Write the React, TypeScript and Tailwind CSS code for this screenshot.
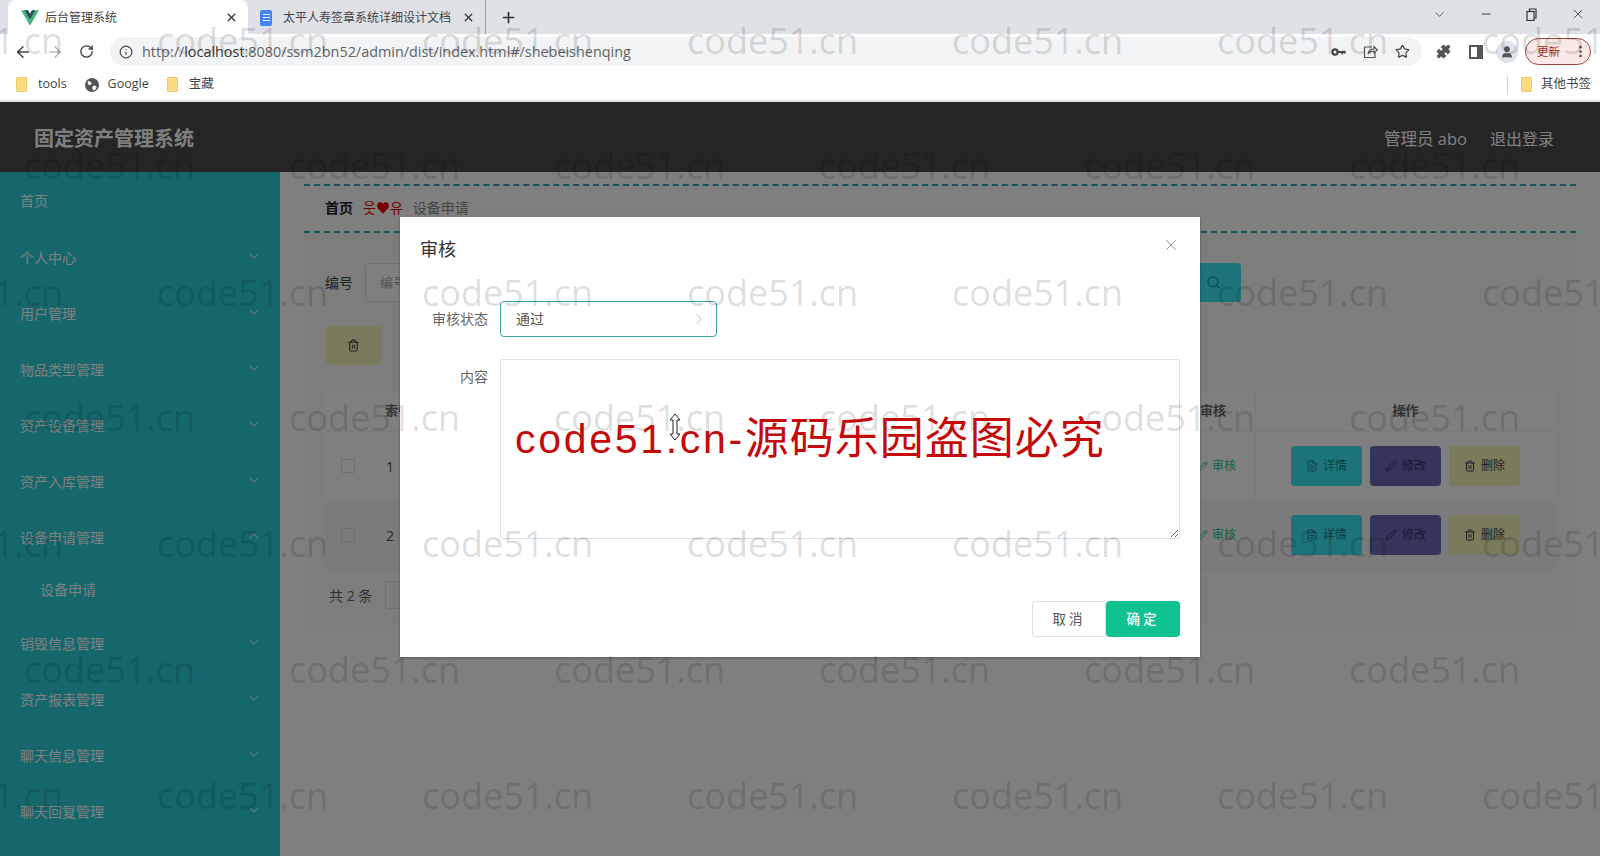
import { ChevronDown, ChevronUp, ChevronRight, ArrowLeft, ArrowRight, RotateCw, Info, Star, Puzzle, X, Plus, Minus, Search, Trash2, FileText, Pencil, User, EllipsisVertical } from "lucide-react";

const font = { fontFamily: '"Open Sans","Noto Sans CJK SC",sans-serif' };

function Folder() {
  return <span className="w-[11px] h-[15px] bg-[#fddc7f] border border-[#eccb70] rounded-[1px] shrink-0" />;
}

function VueLogo() {
  return (
    <svg width="18" height="16" viewBox="0 0 256 221" className="shrink-0">
      <path fill="#41b883" d="M204.8 0H256L128 220.8 0 0h97.92L128 51.2 157.44 0z" />
      <path fill="#35495e" d="M50.56 0 128 133.12 204.8 0h-47.36L128 51.2 97.92 0z" />
    </svg>
  );
}

function Browser() {
  return (
    <div className="shrink-0 bg-white">
      <div className="h-[34px] bg-[#dee1e6] flex items-end relative">
        <div className="ml-[8px] w-[240px] h-[34px] bg-white rounded-t-lg flex items-center pl-[13px] pr-[10px] pt-[1px] gap-[6px] text-[12px] text-[#444]">
          <VueLogo />
          <span className="flex-1">后台管理系统</span>
          <X size={13} strokeWidth={2.4} className="text-[#333]" />
        </div>
        <div className="w-[238px] h-[34px] flex items-center pl-[12px] pr-[10px] pt-[1px] gap-[11px] text-[12px] text-[#444] border-r border-[#9aa0a6] my-0">
          <span className="w-[12px] h-[16px] rounded-[2px] bg-[#4285f4] shrink-0 flex flex-col gap-[2px] justify-center items-center"><span className="w-[7px] h-[1px] bg-white" /><span className="w-[7px] h-[1px] bg-white" /><span className="w-[7px] h-[1px] bg-white" /></span>
          <span className="flex-1 truncate">太平人寿签章系统详细设计文档</span>
          <X size={13} strokeWidth={2.4} className="text-[#333]" />
        </div>
        <Plus size={17} strokeWidth={2.4} className="ml-[14px] mb-[8px] text-[#333]" />
        <div className="ml-auto flex items-center h-[28px] self-start text-[#333] pr-[14px] gap-[32px]">
          <ChevronDown size={15} strokeWidth={1.2} />
          <Minus size={14} strokeWidth={1.6} />
          <svg width="13" height="13" viewBox="0 0 13 13" fill="none" stroke="#333" strokeWidth="1.2"><rect x="2" y="3.5" width="7" height="9" /><path d="M4.5 3.5V1h6.5v9H9" /></svg>
          <X size={16} strokeWidth={1.2} />
        </div>
      </div>
      <div className="h-[34px] flex items-center text-[#5f6368] pl-[14px] pr-[9px] pt-[1px]">
        <ArrowLeft size={18} strokeWidth={2} className="text-[#444]" />
        <ArrowRight size={18} strokeWidth={2} className="ml-[14px] text-[#b8bbbf]" />
        <RotateCw size={15} strokeWidth={2.2} className="ml-[15px] text-[#444]" />
        <div className="ml-[16px] w-[1312px] h-[29px] bg-[#f1f3f4] rounded-full flex items-center pl-[9px] pr-[12px]">
          <Info size={14} strokeWidth={2} className="text-[#444]" />
          <span className="ml-[9px] text-[14.4px] text-[#5f6368]"><span>http://</span><span className="text-[#333]">localhost</span>:8080/ssm2bn52/admin/dist/index.html#/shebeishenqing</span>
          <div className="ml-auto flex items-center gap-[17px]">
            <svg width="15" height="10" viewBox="0 0 15 10" fill="none"><circle cx="4" cy="5" r="2.6" stroke="#444" strokeWidth="2.2" /><path d="M7 4h7.5v2.5H13V6h-1v1.5h-1.5V6H7z" fill="#444" /></svg>
            <svg width="15" height="15" viewBox="0 0 15 15" fill="none" stroke="#555" strokeWidth="1.2"><path d="M9 3H1.5v10.5H12V8" /><path d="M5 10c.5-3.5 3-5 6-5V2.5L14.3 6 11 9V7c-2.5 0-4.500.8-6 3z" /></svg>
            <Star size={15} strokeWidth={2} className="text-[#444]" />
          </div>
        </div>
        <Puzzle size={15} fill="#555" strokeWidth={1.5} className="ml-[14px] text-[#555]" />
        <span className="ml-[18px] w-[14px] h-[14px] border-[2px] border-[#555] border-r-[6px]" />
        <span className="ml-[13px] w-[22px] h-[22px] rounded-full bg-[#dfe3ea] flex items-center justify-center"><User size={14} fill="#555" className="text-[#555]" /></span>
        <div className="ml-[7px] w-[66px] h-[27px] rounded-full border border-[#a1423f] bg-[#fbe9e7] flex items-center pl-[11px] text-[11.5px] text-[#a5322e]">
          <span>更新</span>
          <EllipsisVertical size={15} strokeWidth={2.4} className="ml-auto mr-[2px] text-[#7a4a4a]" />
        </div>
      </div>
      <div className="h-[32px] flex items-center text-[12.5px] text-[#444] pl-[16px] pr-[9px] pt-[1px]">
        <Folder />
        <span className="ml-[11px]">tools</span>
        <svg className="ml-[18px]" width="14" height="14" viewBox="0 0 14 14"><circle cx="7" cy="7" r="7" fill="#555" /><path d="M3 3c2 0 3 1 3.500 2S5 7.500 4 7 2 5 3 3zM8 8c2-.5 3.500 0 3.500 1.500S9 13 8 12s-1-3 0-4z" fill="#fff" /></svg>
        <span className="ml-[9px]">Google</span>
        <span className="ml-[18px] flex"><Folder /></span>
        <span className="ml-[11px]">宝藏</span>
        <div className="ml-auto flex items-center border-l border-[#d5d5d5] pl-[13px] h-[20px]">
          <Folder />
          <span className="ml-[9px]">其他书签</span>
        </div>
      </div>
      <div className="h-[2px] bg-[#e0e0e0]" />
    </div>
  );
}

const menus = [
  ["首页", 0, 57, ""],
  ["个人中心", 1, 56, ""],
  ["用户管理", 1, 56, ""],
  ["物品类型管理", 1, 56, ""],
  ["资产设备管理", 1, 56, ""],
  ["资产入库管理", 1, 56, ""],
  ["设备申请管理", 2, 56, ""],
  ["设备申请", 0, 50, "sub"],
  ["销毁信息管理", 1, 56, ""],
  ["资产报表管理", 1, 56, ""],
  ["聊天信息管理", 1, 56, ""],
  ["聊天回复管理", 1, 56, ""],
] as const;

function Sidebar() {
  return (
    <aside className="w-[280px] shrink-0 bg-[#2aced9] text-white text-[14px]">
      {menus.map(([t, c, h, s]) => (
        <div key={t} style={{ height: h, paddingLeft: s ? 40 : 20 }} className={"flex items-center pr-[18px] " + (s ? "pb-[2px]" : "")}>
          <span>{t}</span>
          {c === 1 && <ChevronDown size={16} strokeWidth={1.5} className="ml-auto -mt-[2px]" />}
          {c === 2 && <ChevronUp size={16} strokeWidth={1.5} className="ml-auto -mt-[2px]" />}
        </div>
      ))}
    </aside>
  );
}

function Btn({ cls, icon, label }: { cls: string; icon: React.ReactNode; label: string }) {
  return (
    <span className={"relative z-10 w-[71px] h-[40px] rounded-[4px] flex items-center justify-center gap-[5px] text-[12px] " + cls}>
      {icon}
      {label}
    </span>
  );
}

function Row({ n, shade }: { n: number; shade?: boolean }) {
  return (
    <div className={"h-[69px] flex items-center border-b border-[#f2f2f2] " + (shade ? "bg-[#f7f7f7]" : "bg-white")}>
      <span className="ml-[16px] w-[14px] h-[14px] border border-[#ddd] rounded-[2px]" />
      <span className="ml-[31px] text-[14px] text-[#555]">{n}</span>
      <span className="ml-auto w-[57px] text-[12px] text-[#1fc690] flex items-center gap-[4px]"><Pencil size={10} />审核</span>
      <div className="w-[300px] pl-[35px] flex gap-[8px] border-l border-[#f2f2f2] h-full items-center">
        <Btn cls="bg-[#1c747a] text-[#0f3f48]" icon={<FileText size={12} />} label="详情" />
        <Btn cls="bg-[#35345a] text-[#16163a]" icon={<Pencil size={12} />} label="修改" />
        <Btn cls="bg-[#7a7a5c] text-[#222]" icon={<Trash2 size={12} />} label="删除" />
      </div>
    </div>
  );
}

function Main() {
  return (
    <main className="flex-1 bg-white px-[24px] pt-[12px]">
      <div className="h-[49px] border-y-2 border-dashed border-[#2aa8b0] flex items-center pl-[21px] pb-[3px] text-[14px]">
        <span className="font-semibold text-[#222]">首页</span>
        <span className="ml-[10px] text-[#f00000]">웃♥유</span>
        <span className="ml-[10px] text-[#888]">设备申请</span>
      </div>
      <div className="bg-[#fbfbfb] px-[21px] h-[398px] flex flex-col">
        <div className="mt-[30px] h-[39px] flex items-center text-[14px] text-[#444]">
          <span>编号</span>
          <span className="ml-[12px] w-[200px] h-[39px] border border-[#ddd] rounded-[4px] bg-white flex items-center pl-[14px] text-[13px] text-[#aaa]">编号</span>
          <span className="relative z-10 ml-[606px] w-[70px] h-[39px] rounded-[4px] bg-[#1c747a] flex items-center justify-end pr-[20px] text-[#0f4a55]"><Search size={15} /></span>
        </div>
        <div className="relative z-10 mt-[23px] w-[57px] h-[40px] rounded-[4px] bg-[#7a7a5c] border border-[#80805f] flex items-center justify-center text-[#222]"><Trash2 size={13} /></div>
        <div className="mt-[24px] h-[43px] bg-white flex items-center border-y border-[#f2f2f2] text-[13px] font-semibold text-[#666]">
          <span className="ml-[60px]">索引</span>
          <span className="ml-auto w-[55px] text-left">审核</span>
          <span className="w-[300px] text-center border-l border-[#f2f2f2] leading-[41px]">操作</span>
        </div>
        <Row n={1} />
        <Row n={2} shade />
        <div className="mt-[11px] flex items-center text-[14px] text-[#666] pl-[4px]">
          <span>共 2 条</span>
          <span className="ml-[13px] w-[100px] h-[28px] border border-[#ddd] rounded-[3px]" />
        </div>
      </div>
    </main>
  );
}

function Modal() {
  return (
    <div className="absolute z-20 left-[400px] top-[115px] w-[800px] h-[440px] bg-white shadow-[0_1px_3px_rgba(0,0,0,0.3)] flex flex-col pl-[20px] pr-[20px]">
      <div className="h-[64px] flex items-center text-[18px] text-[#333] pt-[1px]">
        审核
        <X size={18} strokeWidth={1} className="ml-auto text-[#777] -mt-[9px]" />
      </div>
      <div className="mt-[20px] h-[36px] flex items-center">
        <span className="w-[68px] text-right text-[14px] text-[#666] whitespace-nowrap pb-[2px]">审核状态</span>
        <div className="ml-[12px] w-[217px] h-[36px] border border-[#3aa8a0] rounded-[4px] flex items-center pl-[15px] pr-[8px] pb-[1px] text-[14px] text-[#555]">
          通过
          <ChevronRight size={18} strokeWidth={1} className="ml-auto text-[#aaa]" />
        </div>
      </div>
      <div className="mt-[22px] flex">
        <span className="w-[68px] text-right text-[14px] text-[#666] pt-[7px]">内容</span>
        <textarea aria-label="内容" className="ml-[12px] w-[680px] h-[180px] border border-[#dcdfe6] rounded-[2px] bg-white" />
      </div>
      <div className="mt-[62px] ml-auto flex text-[13.5px]">
        <span className="w-[74px] h-[36px] border border-[#dcdfe6] rounded-l-[4px] flex items-center justify-center tracking-[3px] text-[#555]">取消</span>
        <span className="w-[74px] h-[36px] bg-[#0fc28f] rounded-[4px] flex items-center justify-center tracking-[3px] text-white font-medium">确定</span>
      </div>
    </div>
  );
}

const rows = [41, 166, 293, 418, 544, 670, 796];

function Watermarks() {
  const items: { x: number; y: number; k: string }[] = [];
  rows.forEach((y, r) => {
    const base = r % 2 === 0 ? -108 : 24;
    for (let i = 0; i < 7; i++) items.push({ x: base + i * 265, y, k: r + "-" + i });
  });
  return (
    <div className="absolute z-30 inset-0 overflow-hidden pointer-events-none">
      {items.map((w) => (
        <span key={w.k} style={{ left: w.x, top: w.y - 24 }} className="absolute text-[36px] leading-[48px] text-black/15">code51.cn</span>
      ))}
    </div>
  );
}

export default function App() {
  return (
    <div style={font} className="relative w-[1600px] h-[856px] overflow-hidden flex flex-col bg-white">
      <Browser />
      <div className="relative flex-1 flex flex-col min-h-0">
        <header className="h-[70px] shrink-0 bg-[#4a4a4a] flex items-center pl-[34px] pr-[46px] pt-[4px] text-white">
          <span className="text-[20px] font-bold">固定资产管理系统</span>
          <span className="ml-auto text-[16.5px]">管理员 abo</span>
          <span className="ml-[23px] text-[16px]">退出登录</span>
        </header>
        <div className="flex flex-1 min-h-0">
          <Sidebar />
          <Main />
        </div>
        <div className="absolute inset-0 bg-black/50" />
        <Modal />
      </div>
      <Watermarks />
      <div style={{ fontFamily: '"Liberation Sans","Noto Sans CJK SC",sans-serif' }} className="absolute z-40 left-[515px] top-[411px] leading-[56px] text-[#c40a0a] whitespace-nowrap flex items-center">
        <span className="text-[41px] tracking-[2.7px]">code51.cn-</span>
        <span className="text-[44px] tracking-[1px]">源码乐园盗图必究</span>
      </div>
      <svg className="absolute z-40 left-[668px] top-[413px]" width="14" height="28" viewBox="0 0 14 28" fill="white" stroke="#222" strokeWidth="1"><path d="M7 1 12 7H9V21H12L7 27 2 21H5V7H2Z" /></svg>
    </div>
  );
}
